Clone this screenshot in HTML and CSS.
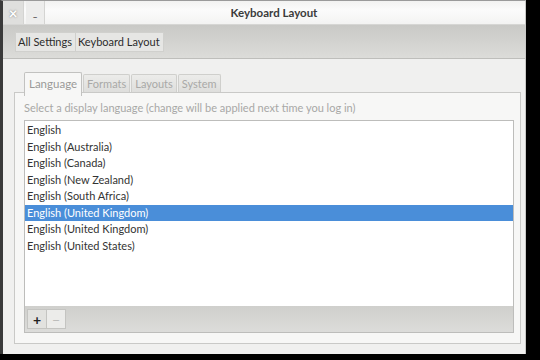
FILE: index.html
```html
<!DOCTYPE html>
<html lang="en">
<head>
    <meta charset="UTF-8">
    <meta name="viewport" content="width=device-width, initial-scale=1.0">
    <title>Keyboard Layout</title>
    <link rel="stylesheet" href="styles.css">
</head>
<body>
    <div class="screen">
        <!-- Application window -->
        <div class="window">
            <div class="titlebar">
                <div class="win-buttons">
                    <span class="win-btn">&times;</span>
                    <span class="win-btn min">_</span>
                </div>
                <div class="title">Keyboard Layout</div>
            </div>

            <!-- Breadcrumb toolbar -->
            <div class="toolbar">
                <div class="crumbs">
                    <span class="crumb">All Settings</span>
                    <span class="crumb">Keyboard Layout</span>
                </div>
            </div>

            <div class="content">
                <div class="tabs">
                    <span class="tab active">Language</span>
                    <span class="tab">Formats</span>
                    <span class="tab">Layouts</span>
                    <span class="tab">System</span>
                </div>
                <div class="panel">
                    <p class="hint">Select a display language (change will be applied next time you log in)</p>
                    <div class="listbox">
                        <ul class="languages">
                            <li>English</li>
                            <li>English (Australia)</li>
                            <li>English (Canada)</li>
                            <li>English (New Zealand)</li>
                            <li>English (South Africa)</li>
                            <li class="selected">English (United Kingdom)</li>
                            <li>English (United Kingdom)</li>
                            <li>English (United States)</li>
                        </ul>
                        <div class="list-actions">
                            <span class="action">+</span>
                            <span class="action disabled">&minus;</span>
                        </div>
                    </div>
                </div>
            </div>
        </div>
    </div>
</body>
</html>
```

FILE: styles.css
```css
/* Desktop behind the window */
body {
    margin: 0;
    background-color: #000;
    font-family: Lato, "Open Sans", sans-serif;
    font-size: 11px;
    color: #3c3c3c;
}
.screen {
    width: 540px;
    height: 360px;
    overflow: hidden;
}
.window {
    width: 522px;
    height: 353px;
    border-left: 3px solid #3a3a3a;
    border-top: 1px solid #9a9a9a;
    border-right: 1px solid #c8c8c6;
    background-color: #f0f0ef;
    display: flex;
    flex-direction: column;
}
/* Title bar */
.titlebar {
    height: 23px;
    display: flex;
    align-items: center;
    background: linear-gradient(#f2f2f1, #fbfbfb 40%, #f3f3f2);
    border-bottom: 1px solid #d6d6d4;
    position: relative;
}
.win-buttons {
    display: flex;
    height: 100%;
}
.win-btn {
    width: 20px;
    display: flex;
    align-items: center;
    justify-content: center;
    background-color: #dfdfdd;
    border-right: 1px solid #d4d4d2;
    color: #fff;
    font-size: 15px;
    font-weight: bold;
    text-shadow: 0 0 2px #777;
}
.win-btn.min {
    background-color: #ededec;
    margin-left: 2px;
    color: #555;
    font-size: 9px;
    text-shadow: none;
    width: 18px;
}
.title {
    position: absolute;
    left: 0;
    right: 0;
    text-align: center;
    padding-left: 20px;
    font-weight: bold;
    font-size: 11.5px;
    color: #3b3b3b;
}
/* Breadcrumb toolbar */
.toolbar {
    height: 33px;
    display: flex;
    align-items: center;
    padding-left: 12px;
    background: linear-gradient(#c9c9c6, #dcdcd9);
    border-bottom: 1px solid #bebebb;
}
.crumbs {
    display: flex;
    background-color: #e6e6e4;
    border: 1px solid #d0d0cd;
    height: 18px;
    font-size: 11px;
    color: #2c2c2c;
}
.crumb {
    display: flex;
    align-items: center;
    padding: 0 3px 0 2px;
}
.crumb + .crumb {
    border-left: 1px solid #cfcfcc;
}
/* Notebook */
.content {
    flex: 1;
    padding: 15px 4px 10px 11px;
    display: flex;
    flex-direction: column;
}
.tabs {
    display: flex;
    padding-left: 10px;
    height: 18px;
}
.tab {
    padding: 2px 3px 0;
    margin-right: 1px;
    border: 1px solid #cfcfcc;
    border-bottom: none;
    border-radius: 2px 2px 0 0;
    background: linear-gradient(#ececea, #dededc);
    color: #a9a9a7;
    font-size: 11px;
}
.tab.active {
    background-color: #f7f7f6;
    background-image: none;
    color: #9a9a98;
    border-color: #c2c2c0;
    height: 19px;
    margin-top: -2px;
    padding: 4px 4px 0;
    font-size: 11.5px;
    position: relative;
    z-index: 1;
}
.panel {
    flex: 1;
    background-color: #f7f7f6;
    border: 1px solid #c9c9c7;
    padding: 0 6px 10px 9px;
    display: flex;
    flex-direction: column;
}
.hint {
    margin: 8px 0 6px;
    color: #a8a8a6;
    font-size: 11px;
}
.listbox {
    flex: 1;
    border: 1px solid #bdbdbb;
    background-color: #fff;
    display: flex;
    flex-direction: column;
}
.languages {
    list-style: none;
    margin: 0;
    padding: 0;
    flex: 1;
}
.languages li {
    height: 16.5px;
    line-height: 16.5px;
    padding-left: 2px;
    color: #333;
    font-size: 11px;
}
.languages li:first-child {
    margin-top: 1px;
}
.languages li.selected {
    background-color: #4a8ed9;
    color: #fff;
}
/* Add / remove buttons under the list */
.list-actions {
    height: 26px;
    display: flex;
    align-items: center;
    padding-left: 2px;
    background: linear-gradient(#cfcfcc, #dcdcda);
}
.action {
    width: 18px;
    height: 18px;
    display: flex;
    align-items: center;
    justify-content: center;
    border: 1px solid #c4c4c1;
    background-color: #e2e2df;
    font-size: 14px;
    font-weight: bold;
    color: #222;
}
.action.disabled {
    border-left: none;
    background-color: #ececea;
    color: #bdbdbb;
    font-weight: normal;
}
```
